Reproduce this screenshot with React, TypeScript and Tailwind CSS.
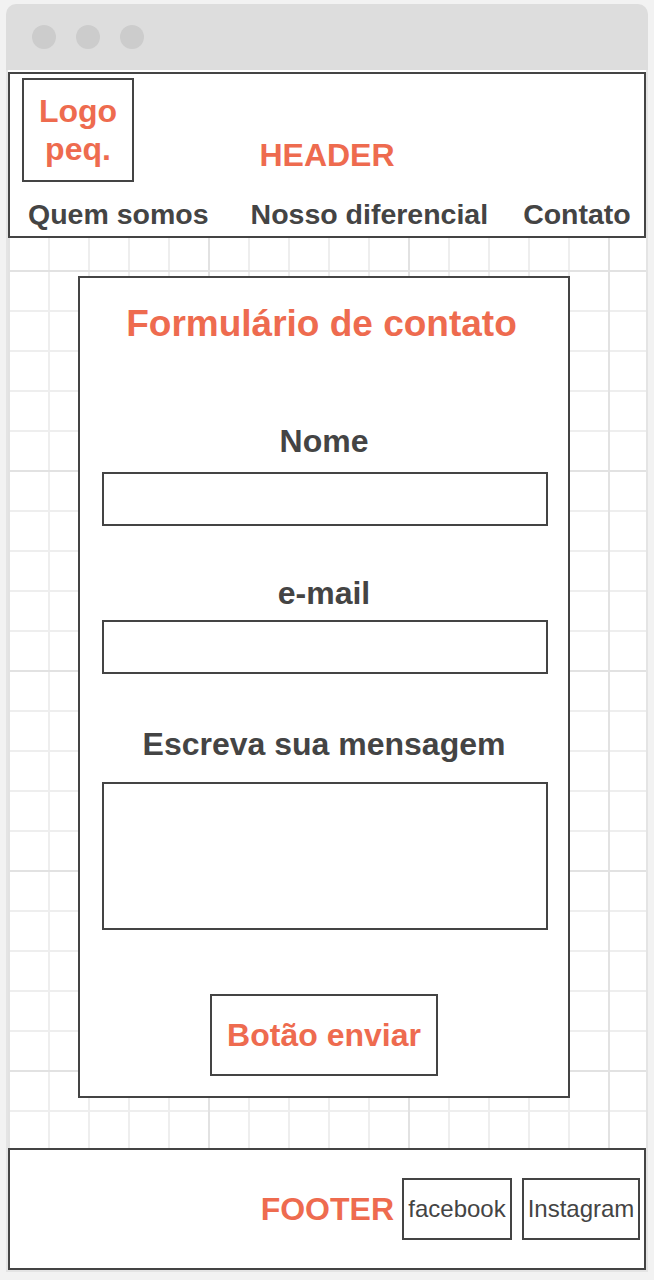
const orange = 'text-[#ee6b4f]'

function WindowBar() {
  return (
    <div className="flex h-[66px] items-center gap-[20px] rounded-t-[10px] bg-[#dddddd] pl-[26px]">
      <span className="h-[24px] w-[24px] rounded-full bg-[#cccccc]" />
      <span className="h-[24px] w-[24px] rounded-full bg-[#cccccc]" />
      <span className="h-[24px] w-[24px] rounded-full bg-[#cccccc]" />
    </div>
  )
}

function Header() {
  return (
    <header className="h-[166px] border-2 border-[#444444] bg-white">
      <div className="grid h-[108px] grid-cols-[1fr_auto_1fr]">
        <div className="ml-[12px] mt-[4px] flex h-[104px] w-[112px] items-center justify-center border-2 border-[#444444]">
          <p className={`text-center text-[32px] font-bold leading-[38px] ${orange}`}>
            Logo
            <br />
            peq.
          </p>
        </div>
        <p className={`mt-[65px] self-start text-[32px] font-bold leading-none ${orange}`}>HEADER</p>
        <div />
      </div>
      {/* menu */}
      <nav className="mt-[18px] flex text-[28.5px] font-bold leading-none text-[#444444]">
        <span className="ml-[18px]">Quem somos</span>
        <span className="ml-[42px]">Nosso diferencial</span>
        <span className="ml-[35px]">Contato</span>
      </nav>
    </header>
  )
}

function Field({ label, top, gap, height }: { label: string; top: string; gap: string; height: string }) {
  return (
    <>
      <p className={`${top} text-[32px] font-bold leading-none text-[#444444]`}>{label}</p>
      <div className={`${gap} ${height} ml-[2px] w-[446px] border-2 border-[#444444] bg-white`} />
    </>
  )
}

function ContactForm() {
  return (
    <div className="ml-[70px] flex w-[492px] flex-col items-center border-2 border-[#444444] bg-white pb-[20px] pt-[27px]">
      <h1 className={`mr-[5px] text-[37px] font-bold leading-none ${orange}`}>Formulário de contato</h1>
      <Field label="Nome" top="mt-[83px]" gap="mt-[15px]" height="h-[54px]" />
      <Field label="e-mail" top="mt-[51px]" gap="mt-[11px]" height="h-[54px]" />
      <Field label="Escreva sua mensagem" top="mt-[54px]" gap="mt-[22px]" height="h-[148px]" />
      <button className="mt-[64px] flex h-[82px] w-[228px] items-center justify-center border-2 border-[#444444] bg-white">
        <span className={`text-[32px] font-bold leading-none ${orange}`}>Botão enviar</span>
      </button>
    </div>
  )
}

function Footer() {
  return (
    <footer className="flex h-[122px] items-center justify-end border-2 border-[#444444] bg-white pr-[4px]">
      <span className={`mr-[8px] text-[32px] font-bold leading-none ${orange}`}>FOOTER</span>
      <span className="flex h-[62px] w-[110px] items-center justify-center border-2 border-[#444444] text-[24px] leading-none text-[#444444]">
        facebook
      </span>
      <span className="ml-[10px] flex h-[62px] w-[118px] items-center justify-center border-2 border-[#444444] text-[24px] leading-none text-[#444444]">
        Instagram
      </span>
    </footer>
  )
}

export default function App() {
  return (
    <div className="min-h-screen bg-[#f2f2f2] px-[6px] pb-[8px] pt-[4px] font-['Liberation_Sans',Arial,sans-serif]">
      <WindowBar />
      <div className="border-x-2 border-b-2 border-[#e4e4e4] bg-white pt-[2px]">
        <Header />
        {/* papel quadriculado */}
        <main className="h-[910px] bg-[linear-gradient(to_right,#e2e2e2_2px,transparent_2px),linear-gradient(to_bottom,#e2e2e2_2px,transparent_2px),linear-gradient(to_right,#eeeeee_2px,transparent_2px),linear-gradient(to_bottom,#eeeeee_2px,transparent_2px)] bg-size-[200px_200px,200px_200px,40px_40px,40px_40px] bg-position-[0_32px,0_32px,0_32px,0_32px] pt-[38px]">
          <ContactForm />
        </main>
        <Footer />
      </div>
    </div>
  )
}
